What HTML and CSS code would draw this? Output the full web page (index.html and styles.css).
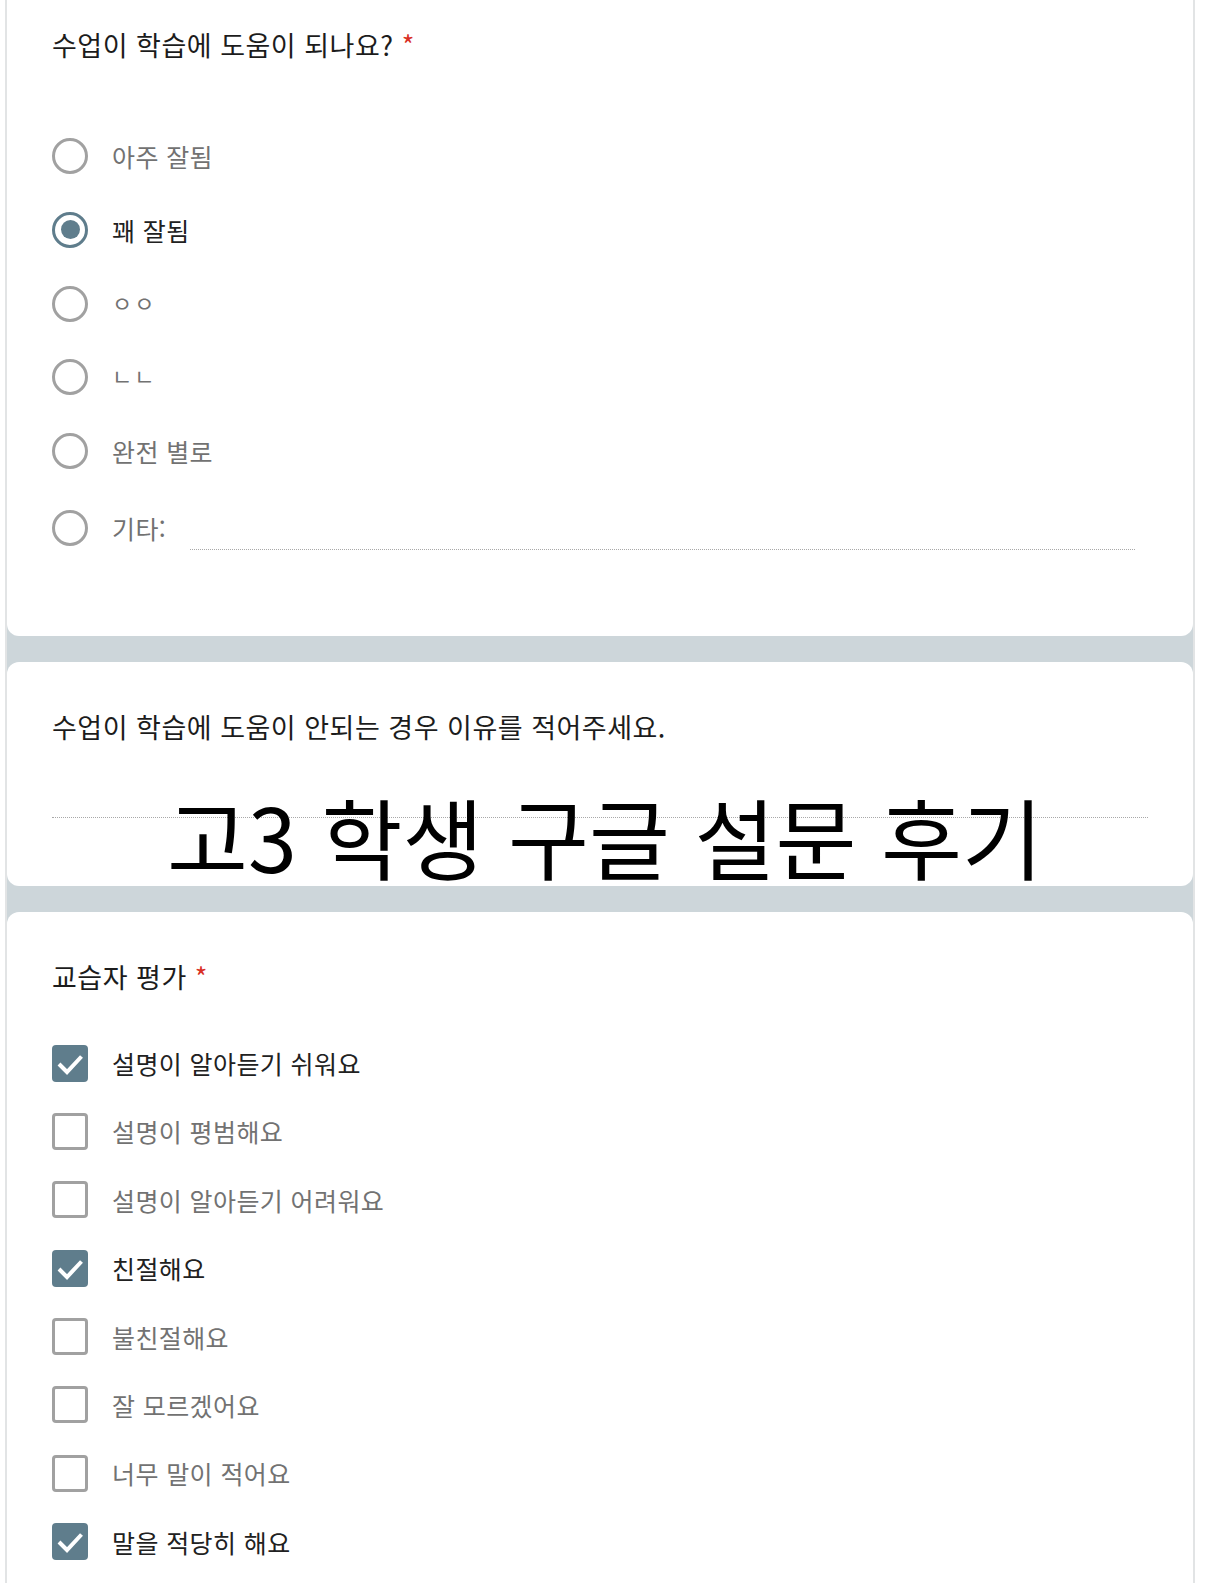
FILE: index.html
```html
<!DOCTYPE html>
<html lang="ko">

<head>
    <meta charset="UTF-8">
    <meta name="viewport" content="width=device-width, initial-scale=1.0">
    <title>고3 학생 구글 설문 후기</title>
    <link rel="stylesheet" href="styles.css">
</head>

<body>
    <div class="form">
        <!-- 수업 도움 여부 -->
        <div class="card card-first">
            <div class="question">수업이 학습에 도움이 되나요? <span class="required">*</span></div>
            <ul class="options radios">
                <li><span class="radio"></span><span class="label">아주 잘됨</span></li>
                <li class="checked"><span class="radio"></span><span class="label">꽤 잘됨</span></li>
                <li><span class="radio"></span><span class="label jamo">ㅇㅇ</span></li>
                <li><span class="radio"></span><span class="label jamo">ㄴㄴ</span></li>
                <li><span class="radio"></span><span class="label">완전 별로</span></li>
                <li class="other">
                    <span class="radio"></span><span class="label">기타:</span>
                    <span class="other-input"></span>
                </li>
            </ul>
        </div>

        <!-- 이유 입력 -->
        <div class="card card-text">
            <div class="question">수업이 학습에 도움이 안되는 경우 이유를 적어주세요.</div>
            <div class="text-input"></div>
        </div>

        <!-- 교습자 평가 -->
        <div class="card card-last">
            <div class="question">교습자 평가 <span class="required">*</span></div>
            <ul class="options checks">
                <li class="checked">
                    <span class="box"><svg viewBox="0 0 36 36"><path d="M7 18.5l8 8L29.5 11" /></svg></span>
                    <span class="label">설명이 알아듣기 쉬워요</span>
                </li>
                <li><span class="box"></span><span class="label">설명이 평범해요</span></li>
                <li><span class="box"></span><span class="label">설명이 알아듣기 어려워요</span></li>
                <li class="checked">
                    <span class="box"><svg viewBox="0 0 36 36"><path d="M7 18.5l8 8L29.5 11" /></svg></span>
                    <span class="label">친절해요</span>
                </li>
                <li><span class="box"></span><span class="label">불친절해요</span></li>
                <li><span class="box"></span><span class="label">잘 모르겠어요</span></li>
                <li><span class="box"></span><span class="label">너무 말이 적어요</span></li>
                <li class="checked">
                    <span class="box"><svg viewBox="0 0 36 36"><path d="M7 18.5l8 8L29.5 11" /></svg></span>
                    <span class="label">말을 적당히 해요</span>
                </li>
            </ul>
        </div>

        <div class="caption">고3 학생 구글 설문 후기</div>
    </div>
</body>

</html>
```

FILE: styles.css
```css
* {
    padding: 0;
    margin: 0;
    box-sizing: border-box;
}

li {
    list-style: none;
}

body {
    height: 1583px;
    overflow: hidden;
    background: #fff;
    font-family: "Noto Sans CJK KR", "Noto Sans", sans-serif;
    color: #202124;
}

.form {
    position: relative;
    width: 1190px;
    margin-left: 5px;
    border-left: 2px solid #e2e4e5;
    border-right: 2px solid #e2e4e5;
    background: #cdd6da;
    display: flex;
    flex-direction: column;
    gap: 26px;
}

.card {
    background: #fff;
    border-radius: 12px;
    padding: 49px 45px 0;
}

.card-first {
    border-radius: 0 0 12px 12px;
    padding-top: 29px;
    height: 636px;
}

.card-text {
    height: 224px;
}

.card-last {
    padding-bottom: 60px;
}

.question {
    font-size: 27px;
    line-height: 32px;
    letter-spacing: 0.5px;
    color: #1c1c1c;
}

.required {
    color: #d93025;
    letter-spacing: 0;
}

.options {
    display: flex;
    flex-direction: column;
}

.options li {
    display: flex;
    align-items: center;
    height: 36px;
}

.label {
    margin-left: 24px;
    font-size: 25px;
    line-height: 36px;
    letter-spacing: 0.4px;
    color: #727272;
}

.options .checked .label {
    color: #212121;
}

.label.jamo {
    font-size: 22px;
    margin-top: -4px;
    letter-spacing: 2px;
}

/* 객관식 */
.radios {
    margin-top: 77px;
    gap: 37.8px;
}

.radio {
    width: 36px;
    height: 36px;
    border: 3.5px solid #a1a1a1;
    border-radius: 50%;
    display: flex;
    align-items: center;
    justify-content: center;
    flex: none;
}

.checked .radio {
    border-color: #5f7d8c;
}

.checked .radio::after {
    content: "";
    width: 19px;
    height: 19px;
    border-radius: 50%;
    background: #5f7d8c;
}

.radios .other {
    margin-top: 3px;
}

.other-input {
    flex: 1;
    align-self: flex-end;
    margin: 0 13px -4px 24px;
    border-bottom: 1px dotted #a8a8a8;
}

/* 단답형 */
.text-input {
    margin-top: 74px;
    width: 1096px;
    border-bottom: 1px dotted #a8a8a8;
}

/* 체크박스 */
.checks {
    margin-top: 52px;
    gap: 32.4px;
}

.box {
    width: 36px;
    height: 37px;
    border: 3.5px solid #a1a1a1;
    border-radius: 4px;
    flex: none;
}

.checked .box {
    border: none;
    background: #5f7d8c;
}

.box svg {
    display: block;
    width: 36px;
    height: 37px;
    fill: none;
    stroke: #fff;
    stroke-width: 4;
}

/* 썸네일 제목 */
.caption {
    position: absolute;
    left: 160px;
    top: 791px;
    font-size: 88px;
    line-height: 1;
    color: #000;
    white-space: nowrap;
}
```
